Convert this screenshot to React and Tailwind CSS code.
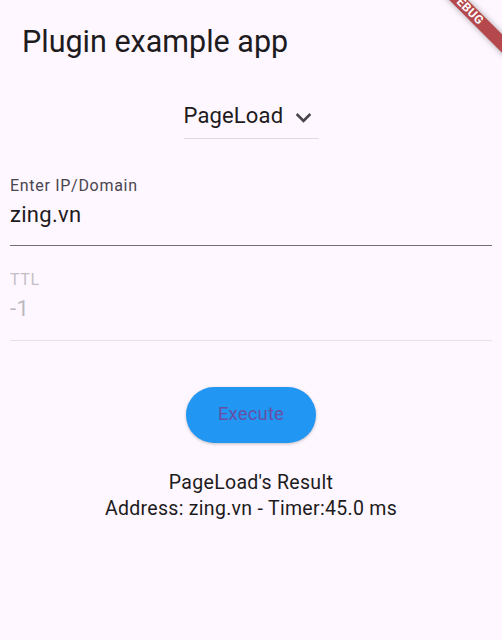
import React from "react";

export default function App() {
  return (
    <div
      className="relative w-full h-[640px] overflow-hidden bg-[#fef7ff] text-[#1d1b20]"
      style={{ fontFamily: "Roboto, 'Noto Sans', sans-serif" }}
    >
      {/* App bar */}
      <div className="pt-[24px] pl-[22px] text-[30.5px] leading-[36px]">Plugin example app</div>

      {/* Dropdown */}
      <div className="mt-[41.5px] flex justify-center">
        <div className="flex items-start pb-[5px] border-b border-[#dedbe1] w-[135px]">
          <span className="text-[22px] leading-[28px] tracking-[0.15px] text-[#1d1b20]">PageLoad</span>
          <svg
            className="ml-auto w-[31px] h-[31px] text-[#49454f]"
            viewBox="0 0 24 24"
            fill="currentColor"
          >
            <path d="M7.41 8.59 12 13.17l4.59-4.58L18 10l-6 6-6-6 1.41-1.41z" />
          </svg>
        </div>
      </div>

      {/* Fields */}
      <div className="px-[10px]">
        <div className="mt-[37px] border-b-[1.5px] border-[#736e78] pb-[16px]">
          <div className="text-[16px] leading-[20px] tracking-[0.7px] text-[#49454f]">Enter IP/Domain</div>
          <div className="mt-[5px] text-[22px] leading-[28px] tracking-[0.3px] text-[#1d1b20]">zing.vn</div>
        </div>
        <div className="mt-[24.5px] border-b border-[#e6e1e9] pb-[16.5px]">
          <div className="text-[16px] leading-[20px] tracking-[0.7px] text-[#c3bfc7]">TTL</div>
          <div className="mt-[5px] text-[22px] leading-[28px] tracking-[0.3px] text-[#bdb9c1]">-1</div>
        </div>
      </div>

      {/* Button */}
      <div className="mt-[46px] flex justify-center">
        <button className="w-[130px] h-[56px] rounded-full bg-[#2196f3] text-[#6750a4] text-[18.5px] tracking-[0.15px] shadow-[0_1px_3px_rgba(0,0,0,0.25)] flex items-center justify-center">
          Execute
        </button>
      </div>

      {/* Result */}
      <div className="mt-[27px] text-center text-[19.5px] leading-[26px] tracking-[0.3px] text-[#1d1b20]">
        <div>PageLoad's Result</div>
        <div>Address: zing.vn - Timer:45.0 ms</div>
      </div>

      {/* Debug banner */}
      <div
        className="absolute left-[407px] top-[2px] w-[120px] h-[13px] rotate-45 bg-[#b5484c] shadow-[0_0_6px_rgba(0,0,0,0.35)] flex items-center justify-center text-white text-[12px] font-bold leading-[13px] tracking-[0.5px]"
      >
        DEBUG
      </div>
    </div>
  );
}
